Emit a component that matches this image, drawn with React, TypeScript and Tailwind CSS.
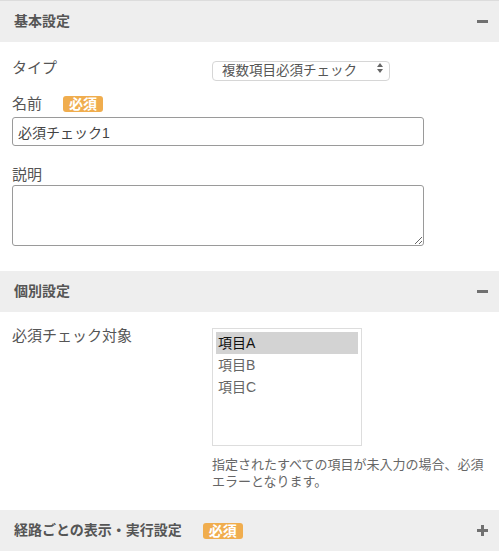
const font = { fontFamily: '"Liberation Sans", "Noto Sans CJK JP", sans-serif' };

function Badge() {
  return (
    <span className="inline-flex items-center h-[16px] px-[6px] rounded-[3px] bg-[#f0ad4e] text-white text-[14px] font-bold leading-none">
      必須
    </span>
  );
}

function SectionHeader({ title, open, required }: { title: string; open: boolean; required?: boolean }) {
  return (
    <div className="flex items-center h-[41px] bg-[#eeeeee] pl-[14px] pr-[11px]">
      <span className="text-[14px] font-bold text-[#555]">{title}</span>
      {required && <span className="ml-[21px] flex"><Badge /></span>}
      <span className="ml-auto flex">
        {open ? (
          <svg width="11" height="3" viewBox="0 0 11 3">
            <rect width="11" height="3" fill="#707070" />
          </svg>
        ) : (
          <svg width="11" height="11" viewBox="0 0 11 11">
            <path d="M4 0h3v4h4v3H7v4H4V7H0V4h4z" fill="#707070" />
          </svg>
        )}
      </span>
    </div>
  );
}

export default function App() {
  return (
    <div className="w-[499px] h-[552px] overflow-hidden bg-white border-t border-[#dcdcdc]" style={font}>
      <SectionHeader title="基本設定" open />
      <div className="pt-[16px] pb-[25px] pl-[12px] pr-[75px] text-[#555]">
        <div className="flex items-center h-[20px]">
          <span className="w-[200px] text-[15px] leading-5">タイプ</span>
          <div className="relative w-[178px] h-[20px]">
            <select className="appearance-none w-full h-full border border-[#d6d6d6] rounded-[4px] bg-white pl-[9px] text-[13.5px] text-[#555] leading-none outline-none">
              <option>複数項目必須チェック</option>
            </select>
            <svg className="absolute right-[7px] top-[5px] pointer-events-none" width="6" height="10" viewBox="0 0 6 10">
              <path d="M3 0 L6 4 L0 4 Z M0 6 L6 6 L3 10 Z" fill="#666" />
            </svg>
          </div>
        </div>

        <div className="flex items-center gap-[21px] h-[20px] mt-[16px]">
          <span className="text-[15px] leading-5">名前</span>
          <Badge />
        </div>
        <input
          className="block mt-[3px] w-[412px] h-[29px] border border-[#9a9a9a] rounded-[3px] px-[5px] text-[14px] text-[#444] outline-none"
          defaultValue="必須チェック1"
        />

        <div className="mt-[19px] text-[15px] leading-5">説明</div>
        <textarea className="block w-[412px] h-[61px] border border-[#9a9a9a] rounded-[3px] outline-none" />
      </div>

      <SectionHeader title="個別設定" open />
      <div className="flex pt-[14px] pb-[20px] pl-[12px] pr-[12px] text-[#555]">
        <span className="w-[200px] shrink-0 text-[15px] leading-5">必須チェック対象</span>
        <div className="flex-1 pt-[2px]">
          <div className="w-[150px] h-[118px] border border-[#dddddd] p-[3px] text-[14px]">
            <div className="h-[22px] leading-[22px] pl-[2px] bg-[#d3d3d3] text-[#111]">項目A</div>
            <div className="h-[22px] leading-[22px] pl-[2px] text-[#666]">項目B</div>
            <div className="h-[22px] leading-[22px] pl-[2px] text-[#666]">項目C</div>
          </div>
          <p className="mt-[10px] text-[13px] leading-[17px] text-[#666]">
            指定されたすべての項目が未入力の場合、必須エラーとなります。
          </p>
        </div>
      </div>

      <SectionHeader title="経路ごとの表示・実行設定" open={false} required />
    </div>
  );
}
